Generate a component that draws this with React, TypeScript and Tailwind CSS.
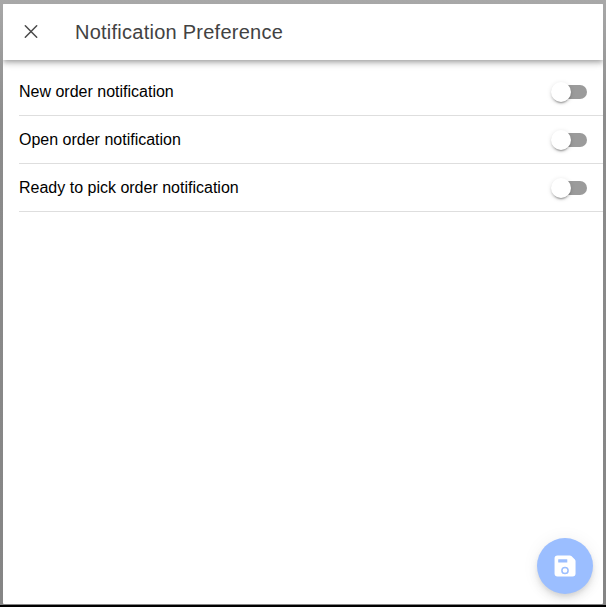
import React from "react";

const options = [
  "New order notification",
  "Open order notification",
  "Ready to pick order notification",
];

function CloseIcon() {
  return (
    <svg width="26" height="26" viewBox="0 0 26 26" fill="none" stroke="currentColor" strokeWidth="1.5" strokeLinecap="round">
      <path d="M7.3 6.8 18.7 18.2M18.7 6.8 7.3 18.2" />
    </svg>
  );
}

function SaveIcon() {
  return (
    <svg width="24" height="24" viewBox="0 0 24 24">
      <path
        fill="white"
        d="M4.5 1.4h12.3c.6 0 1.2.25 1.6.65l3.5 3.5c.4.4.65 1 .65 1.6V19.5a3 3 0 0 1-3 3h-15a3 3 0 0 1-3-3v-15a3 3 0 0 1 3-3.1z"
      />
      <rect x="5.2" y="5.2" width="9.1" height="3.4" rx="0.4" fill="#9bbeff" />
      <circle cx="12" cy="16.5" r="3.1" fill="none" stroke="#9bbeff" strokeWidth="1.5" />
    </svg>
  );
}

function Toggle() {
  return (
    <button role="switch" aria-checked={false} className="flex w-9 items-center">
      <span className="z-1 h-5 w-5 shrink-0 rounded-full bg-white shadow-[0_3px_1px_-2px_rgba(0,0,0,0.2),0_2px_2px_0_rgba(0,0,0,0.14),0_1px_5px_0_rgba(0,0,0,0.12)]" />
      <span className="-ml-[10px] h-[14px] w-[26px] shrink-0 rounded-r-full bg-[#9b9b9b]" />
    </button>
  );
}

export default function App() {
  return (
    <div className="h-[607px] w-[606px] overflow-hidden border-b-2 border-black bg-linear-to-b from-[#a8a8a8] from-0% via-[#8c8c8c] via-20% to-[#858585] px-[3px] pt-1 font-['Liberation_Sans',Arial,sans-serif]">
      <div className="flex h-[600px] flex-col overflow-hidden rounded-[1px] bg-white">
        <header className="relative z-10 flex h-14 shrink-0 items-center bg-white text-[#424242] shadow-[0_2px_4px_-1px_rgba(0,0,0,0.2),0_4px_5px_0_rgba(0,0,0,0.14),0_1px_10px_0_rgba(0,0,0,0.12)]">
          <button aria-label="Close" className="ml-1 flex h-12 w-12 items-center justify-center text-[#4a4a4a]">
            <CloseIcon />
          </button>
          <h1 className="pl-5 text-[20px] font-medium leading-6 tracking-[0.25px]">
            Notification Preference
          </h1>
        </header>
        <main className="flex flex-1 flex-col justify-between pt-2">
          <ul>
            {options.map((label) => (
              <li
                key={label}
                className="ml-4 flex h-12 items-center justify-between border-b border-[#dedede] pr-4 text-base text-black"
              >
                {label}
                <Toggle />
              </li>
            ))}
          </ul>
          <button
            aria-label="Save"
            className="mr-[10px] mb-[10px] flex h-14 w-14 items-center justify-center self-end rounded-full bg-[#9bbeff] shadow-[0_3px_5px_-1px_rgba(0,0,0,0.1),0_6px_10px_0_rgba(0,0,0,0.07),0_1px_18px_0_rgba(0,0,0,0.06)]"
          >
            <SaveIcon />
          </button>
        </main>
      </div>
    </div>
  );
}
